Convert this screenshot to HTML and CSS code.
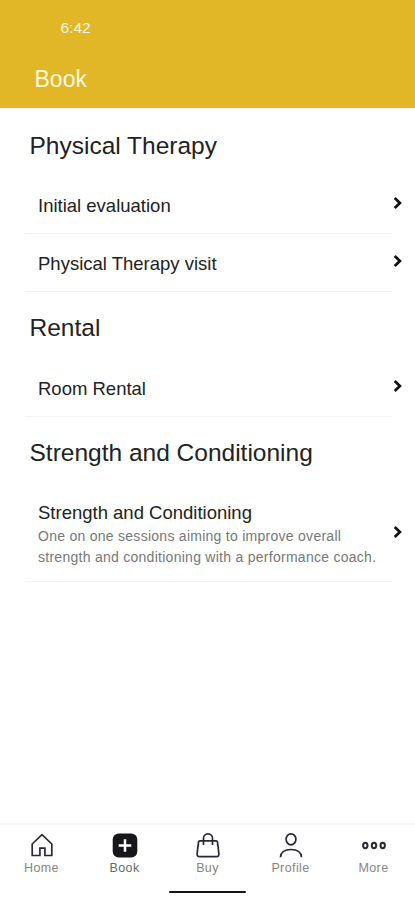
FILE: index.html
```html
<!DOCTYPE html>
<html lang="en">
<head>
<meta charset="utf-8">
<meta name="viewport" content="width=device-width, initial-scale=1">
<title>Book</title>
<link rel="stylesheet" href="styles.css">
</head>
<body>
<div class="app">
  <header class="header">
    <div class="time">6:42</div>
    <h1 class="title">Book</h1>
  </header>
  <main class="content">
    <section>
      <h2 class="heading">Physical Therapy</h2>
      <div class="row">
        <div class="name">Initial evaluation</div>
        <svg class="chevron" viewBox="0 0 10 14"><path d="M1.7 2.1 6.9 7l-5.2 4.9"/></svg>
      </div>
      <div class="row">
        <div class="name">Physical Therapy visit</div>
        <svg class="chevron" viewBox="0 0 10 14"><path d="M1.7 2.1 6.9 7l-5.2 4.9"/></svg>
      </div>
    </section>
    <section>
      <h2 class="heading">Rental</h2>
      <div class="row">
        <div class="name">Room Rental</div>
        <svg class="chevron" viewBox="0 0 10 14"><path d="M1.7 2.1 6.9 7l-5.2 4.9"/></svg>
      </div>
    </section>
    <section>
      <h2 class="heading">Strength and Conditioning</h2>
      <div class="row row-tall">
        <div>
          <div class="name">Strength and Conditioning</div>
          <p class="desc">One on one sessions aiming to improve overall<br>strength and conditioning with a performance coach.</p>
        </div>
        <svg class="chevron" viewBox="0 0 10 14"><path d="M1.7 2.1 6.9 7l-5.2 4.9"/></svg>
      </div>
    </section>
  </main>
  <nav class="tabs">
    <a class="tab">
      <svg class="icon" viewBox="0 0 26 26"><path d="M3.200 12 13 2.700l9.800 9.300v11.500h-6.900v-7.300h-5v7.300H3.200z"/></svg>
      <span>Home</span>
    </a>
    <a class="tab tab-active">
      <svg class="icon" viewBox="0 0 26 26"><rect class="solid" x=".7" y="1.400" width="24.6" height="24.200" rx="6"/><path class="plus" d="M13 7.200v12.600M6.700 13.500h12.600"/></svg>
      <span>Book</span>
    </a>
    <a class="tab">
      <svg class="icon" viewBox="0 0 26 26"><path d="M5 8.800h16c.9 0 1.400.5 1.500 1.300l1.400 11.600c.2 1.800-.7 3-2.500 3H4.600c-1.800 0-2.700-1.200-2.500-3l1.400-11.600c.1-.8.6-1.300 1.500-1.300zM8.500 13V6.300a4.500 4.500 0 0 1 9 0V13"/></svg>
      <span>Buy</span>
    </a>
    <a class="tab">
      <svg class="icon" viewBox="0 0 26 26"><ellipse cx="13" cy="7.300" rx="4.900" ry="5.500"/><path d="M2.500 25.200c.3-5 4-7.700 10.500-7.700s10.200 2.700 10.500 7.700"/></svg>
      <span>Profile</span>
    </a>
    <a class="tab">
      <svg class="icon" viewBox="0 0 26 26"><g class="dots"><ellipse cx="4.300" cy="13.500" rx="2.200" ry="2.700"/><ellipse cx="13" cy="13.500" rx="2.200" ry="2.700"/><ellipse cx="21.700" cy="13.500" rx="2.200" ry="2.700"/></g></svg>
      <span>More</span>
    </a>
  </nav>
  <div class="home-bar"></div>
</div>
</body>
</html>
```
FILE: styles.css
```css
* { box-sizing: border-box; }

body {
  margin: 0;
  background: #fff;
  color: #222;
  font-family: "Liberation Sans", Arial, sans-serif;
}

.app {
  display: flex;
  flex-direction: column;
  height: 900px;
}

.header {
  height: 108px;
  padding: 19px 34.5px 0;
  background: #e1b727;
  color: #fff8e0;
}

.time {
  padding-left: 26px;
  font-size: 15.5px;
  line-height: 18px;
}

.title {
  margin: 28px 0 0;
  font-size: 23px;
  font-weight: 400;
  line-height: 28px;
}

.content {
  flex: 1;
  padding: 10px 23px 0 25px;
}

.heading {
  margin: 0;
  padding: 12px 0 0 4.5px;
  height: 58px;
  font-size: 24.5px;
  font-weight: 400;
  line-height: 32px;
}

section + section { padding-top: 9px; }
section + section .heading { padding-top: 11px; }

.row {
  display: flex;
  align-items: center;
  height: 58px;
  padding: 3px 0 0 13px;
  border-bottom: 1px solid #f3f3f3;
}

.row-tall {
  height: 98px;
  padding-top: 4px;
}

.name {
  font-size: 18.5px;
  line-height: 24px;
}

.desc {
  margin: 0;
  padding-top: 1px;
  color: #777;
  font-size: 14px;
  letter-spacing: 0.27px;
  line-height: 21px;
  white-space: nowrap;
}

.chevron {
  flex: none;
  width: 10px;
  height: 14px;
  margin: 0 -11px 6px auto;
  fill: none;
  stroke: #111;
  stroke-width: 2.7;
}

.tabs {
  display: flex;
  height: 62px;
  border-top: 2px solid #f8f8f8;
}

.tab {
  display: flex;
  flex: 1;
  flex-direction: column;
  align-items: center;
  padding-top: 7px;
  color: #858585;
  font-size: 12.5px;
  letter-spacing: 0.4px;
  line-height: 20px;
}

.tab-active { color: #666; }

.icon {
  width: 26px;
  height: 26px;
  fill: none;
  stroke: #292934;
  stroke-width: 1.7;
}

.solid { fill: #17171b; stroke: none; }
.plus { stroke: #fff; stroke-width: 2.5; }
.dots { stroke-width: 2; }

.home-bar {
  width: 77px;
  height: 2px;
  margin: 6px auto 7px;
  border-radius: 1px;
  background: #151515;
}
```
